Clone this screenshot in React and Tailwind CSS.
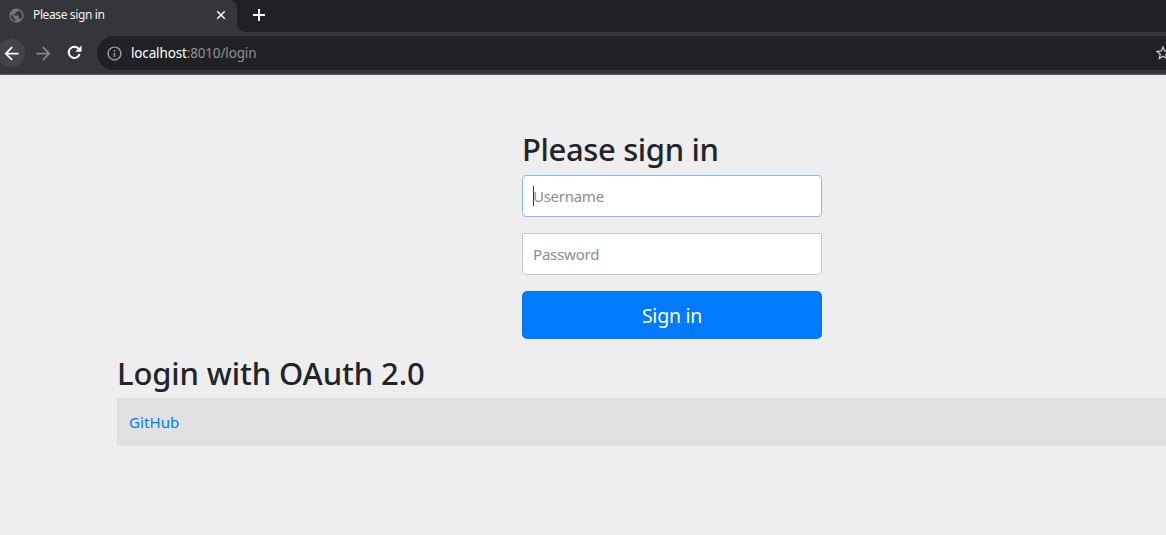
import { MdArrowBack, MdArrowForward, MdOutlineInfo, MdPublic, MdStarOutline } from "react-icons/md";

function TabStrip() {
  return (
    <div className="flex h-8 shrink-0 bg-[#202124]">
      <div className="flex h-8 w-[237px] items-center rounded-tr-[8px] bg-[#35363a] pb-[2px] pl-[8px] pr-[11px]">
        <MdPublic size={17} className="shrink-0 text-[#717579]" />
        <span className="ml-[8px] flex-1 whitespace-nowrap text-[12px] tracking-[-0.38px] text-[#f1f3f4]">Please sign in</span>
        <svg className="size-[10px]" viewBox="0 0 10 10" fill="none" stroke="#f1f3f4" strokeWidth="1.6">
          <path d="M1.2 1.2L8.8 8.8M8.8 1.2L1.2 8.8" />
        </svg>
      </div>
      <svg className="h-2 w-2 self-end" viewBox="0 0 8 8">
        <path d="M0 0A8 8 0 0 0 8 8H0Z" fill="#35363a" />
      </svg>
      <svg className="ml-[8px] mt-[9px] size-3" viewBox="0 0 12 12" fill="none" stroke="#ffffff" strokeWidth="2">
        <path d="M6 0V12M0 6H12" />
      </svg>
    </div>
  );
}

function Toolbar() {
  return (
    <div className="flex h-[43px] shrink-0 items-start border-b border-[#5b5c5f] bg-[#35363a] pt-1">
      <div className="-ml-[3px] mt-[3px] flex size-7 shrink-0 items-center justify-center rounded-full bg-[#434448]">
        <MdArrowBack size={21} className="text-white" />
      </div>
      <MdArrowForward size={21} className="ml-[8px] mt-[7px] shrink-0 text-[#85868a]" />
      <svg className="ml-[13px] mt-[9px] size-[15px] shrink-0" viewBox="0 0 15 15">
        <path d="M12.6 9.2A5.6 5.6 0 1 1 11.5 3.6" fill="none" stroke="#ffffff" strokeWidth="2" />
        <path d="M14.5 0.5V6.8H8.2Z" fill="#ffffff" />
      </svg>
      <div className="ml-[15px] flex h-[34px] flex-1 items-center rounded-l-full bg-[#202124] pl-[9px]">
        <MdOutlineInfo size={17} className="shrink-0 text-[#9aa0a6]" />
        <span className="ml-[8px] flex-1 whitespace-nowrap text-[13.5px] tracking-[-0.15px] text-[#8e9297]">
          <span className="text-white">localhost</span>:8010/login
        </span>
        <MdStarOutline size={18} className="-mr-[6px] shrink-0 text-[#d0d1d3]" />
      </div>
    </div>
  );
}

export default function App() {
  return (
    <div className="flex h-[535px] w-[1166px] flex-col overflow-hidden bg-[#eeeeee] font-['Noto_Sans','Open_Sans',sans-serif] text-[#212529]">
      <TabStrip />
      <Toolbar />
      <main className="flex flex-col pl-[117px] pt-[55px]">
        <form className="ml-[405px] flex w-[300px] flex-col">
          <h2 className="h-[45px] whitespace-nowrap text-[31px] font-medium leading-[38px] tracking-[-0.37px]">Please sign in</h2>
          <div className="relative flex h-[42px] items-center rounded-[4px] border border-[#80bdff] bg-white pl-[10px] text-[15px] tracking-[-0.27px] text-[#868e96]">
            <span className="absolute left-[10px] top-[10px] h-5 w-px bg-[#333333]" />
            Username
          </div>
          <div className="mt-4 flex h-[42px] items-center rounded-b-[4px] border border-[#c8c8c8] bg-white pl-[10px] text-[15px] tracking-[-0.2px] text-[#868e96]">
            Password
          </div>
          <button type="button" className="mt-4 h-12 rounded-[5px] bg-[#007bff] pt-[2px] text-[19.5px] tracking-[-0.25px] text-white">Sign in</button>
        </form>
        <h2 className="mt-[15px] h-[44px] whitespace-nowrap text-[31px] font-medium leading-[38px] tracking-[-0.12px]">Login with OAuth 2.0</h2>
        <div className="flex h-12 items-center bg-[#e1e1e1] pl-3">
          <a className="text-[15px] tracking-[0.1px] text-[#007bff]">GitHub</a>
        </div>
      </main>
    </div>
  );
}
